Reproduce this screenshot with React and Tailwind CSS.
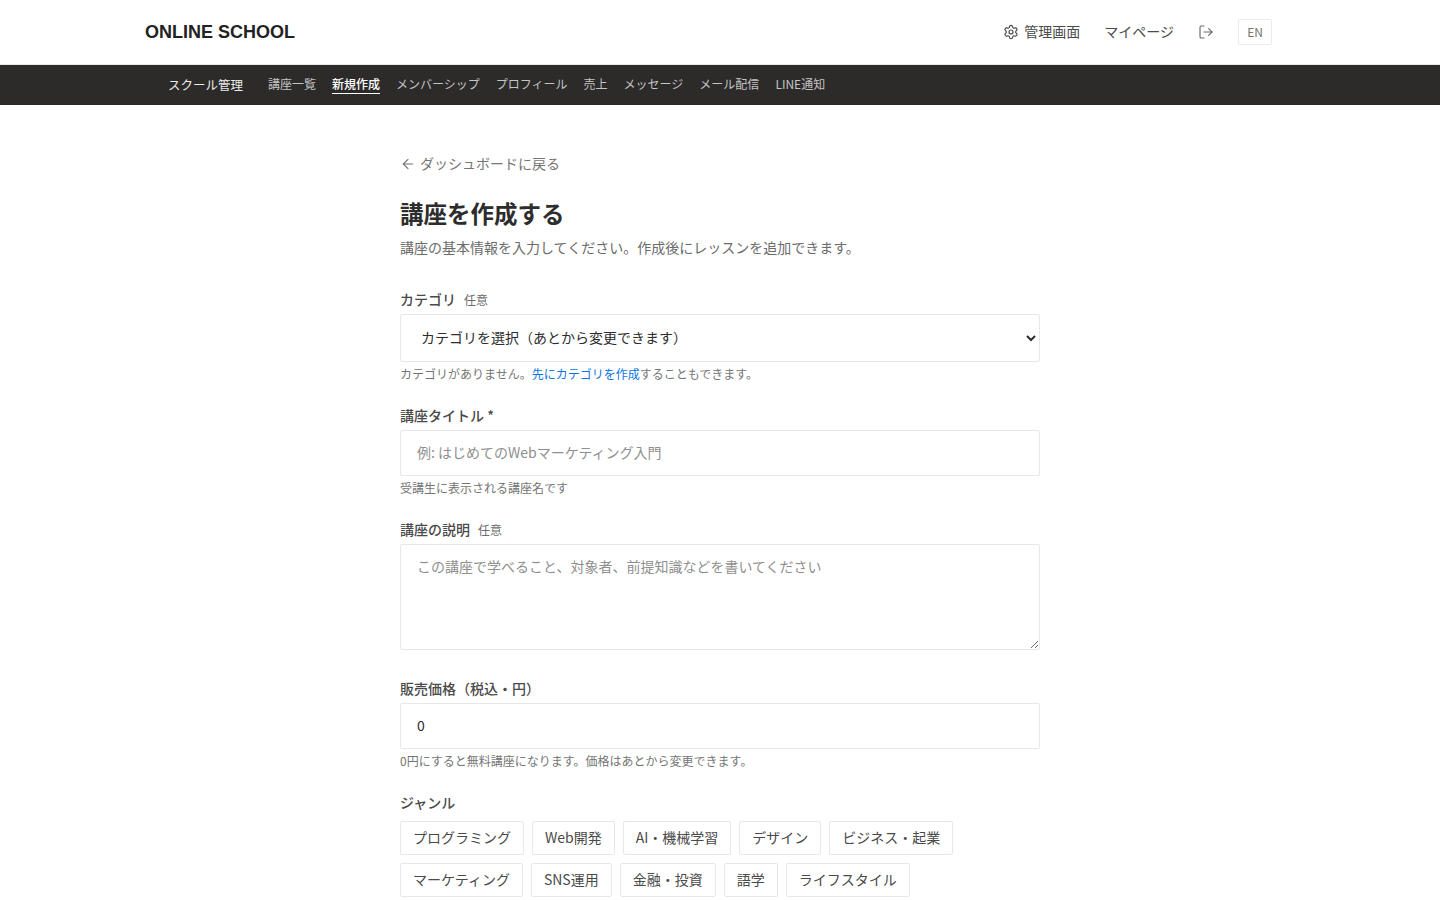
import React from "react";
import { ArrowLeft, LogOut, Settings } from "lucide-react";

const navItems = ["講座一覧", "新規作成", "メンバーシップ", "プロフィール", "売上", "メッセージ", "メール配信", "LINE通知"];
const genresTop = ["プログラミング", "Web開発", "AI・機械学習", "デザイン", "ビジネス・起業"];
const genresBottom = ["マーケティング", "SNS運用", "金融・投資", "語学", "ライフスタイル"];
const font = "font-['Noto_Sans_CJK_JP','Noto_Sans',sans-serif] [text-spacing-trim:space-all]";

const Label = ({ children, optional }) => (
    <div className="flex items-center gap-2 h-[20px] mb-[5px]">
        <label className="text-[14px] leading-[20px] font-medium text-[#4a4a4a]">{children}</label>
        {optional && <span className="mt-[2px] text-[12px] leading-[18px] text-[#6b6b6b]">任意</span>}
    </div>
);

const Help = ({ children }) => <p className="mt-[3px] text-[12px] leading-[18px] text-[#757575]">{children}</p>;

const Genre = ({ name }) => (
    <button className="h-[34px] px-[12px] pb-[2px] border border-[#e8e8e8] rounded-[2px] bg-white text-[14px] text-[#4a4a4a]">{name}</button>
);

export default function App() {
    return (
        <div className={`min-h-screen bg-white text-[#2d2d2d] ${font}`}>
            <header className="h-[65px] flex items-center justify-between pl-[145px] pr-[168px] border-b border-[#e8e8e8]">
                <div className="font-['Liberation_Sans',sans-serif] font-bold text-[18px] text-[#222222]">ONLINE SCHOOL</div>
                <div className="flex items-center text-[14px] text-[#4a4a4a] mb-[1px]">
                    <a className="flex items-center gap-[5px]"><Settings size={16} strokeWidth={1.75} />管理画面</a>
                    <a className="ml-[24px]">マイページ</a>
                    <LogOut size={16} strokeWidth={1.75} className="ml-[24px] text-[#6b6b6b]" />
                    <span className="ml-[24px] w-[34px] h-[26px] flex items-center justify-center border border-[#ebebeb] rounded-[2px] text-[12px] text-[#757575]">EN</span>
                </div>
            </header>
            <nav className="h-[40px] bg-[#2c2b2a] flex items-center pl-[168px] text-white">
                <span className="text-[12.5px] text-[#ececec] mr-[25px]">スクール管理</span>
                <div className="flex items-center gap-[16px] text-[12px] pb-[2px]">
                    {navItems.map((item) => (
                        <a key={item} className={item === "新規作成" ? "font-medium text-white border-b border-white leading-[18px]" : "text-[#c4c4c4] leading-[18px]"}>{item}</a>
                    ))}
                </div>
            </nav>
            <main className="w-[640px] mx-auto pt-[48px]">
                <a className="flex items-center gap-[4px] h-[20px] text-[14px] text-[#757575]"><ArrowLeft size={16} strokeWidth={1.75} className="mt-[2px]" />ダッシュボードに戻る</a>
                <h1 className="mt-[22px] text-[23.5px] leading-[36px] font-bold text-[#2d2d2d]">講座を作成する</h1>
                <p className="mt-[6px] text-[14px] leading-[20px] text-[#6b6b6b]">講座の基本情報を入力してください。作成後にレッスンを追加できます。</p>

                <div className="mt-[32px]">
                    <Label optional>カテゴリ</Label>
                    <select className="w-full h-[48px] px-[16px] pb-[2px] border border-[#e8e8e8] rounded-[2px] bg-white text-[14px] text-[#2d2d2d]">
                        <option>カテゴリを選択（あとから変更できます）</option>
                    </select>
                    <Help>カテゴリがありません。<span className="text-[#0b74e5]">先にカテゴリを作成</span>することもできます。</Help>
                </div>
                <div className="mt-[22px]">
                    <Label>講座タイトル *</Label>
                    <input placeholder="例: はじめてのWebマーケティング入門" className="block w-full h-[46px] px-[16px] pb-[2px] border border-[#e8e8e8] rounded-[2px] text-[14px] placeholder:text-[#8f8f8f]" />
                    <Help>受講生に表示される講座名です</Help>
                </div>
                <div className="mt-[22px]">
                    <Label optional>講座の説明</Label>
                    <textarea placeholder="この講座で学べること、対象者、前提知識などを書いてください" className="block w-full h-[106px] px-[16px] pt-[11px] pb-[12px] border border-[#e8e8e8] rounded-[2px] text-[14px] placeholder:text-[#8f8f8f]" />
                </div>
                <div className="mt-[28px]">
                    <Label>販売価格（税込・円）</Label>
                    <input defaultValue="0" className="block w-full h-[46px] px-[16px] pb-[2px] border border-[#e8e8e8] rounded-[2px] text-[14px] text-[#2d2d2d]" />
                    <Help>0円にすると無料講座になります。価格はあとから変更できます。</Help>
                </div>
                <div className="mt-[22px]">
                    <Label>ジャンル</Label>
                    <div className="mt-[9px] flex flex-wrap gap-[8px]">
                        {genresTop.map((g) => <Genre key={g} name={g} />)}
                    </div>
                    <div className="mt-[8px] flex flex-wrap gap-[8px]">
                        {genresBottom.map((g) => <Genre key={g} name={g} />)}
                    </div>
                </div>
            </main>
        </div>
    );
}
